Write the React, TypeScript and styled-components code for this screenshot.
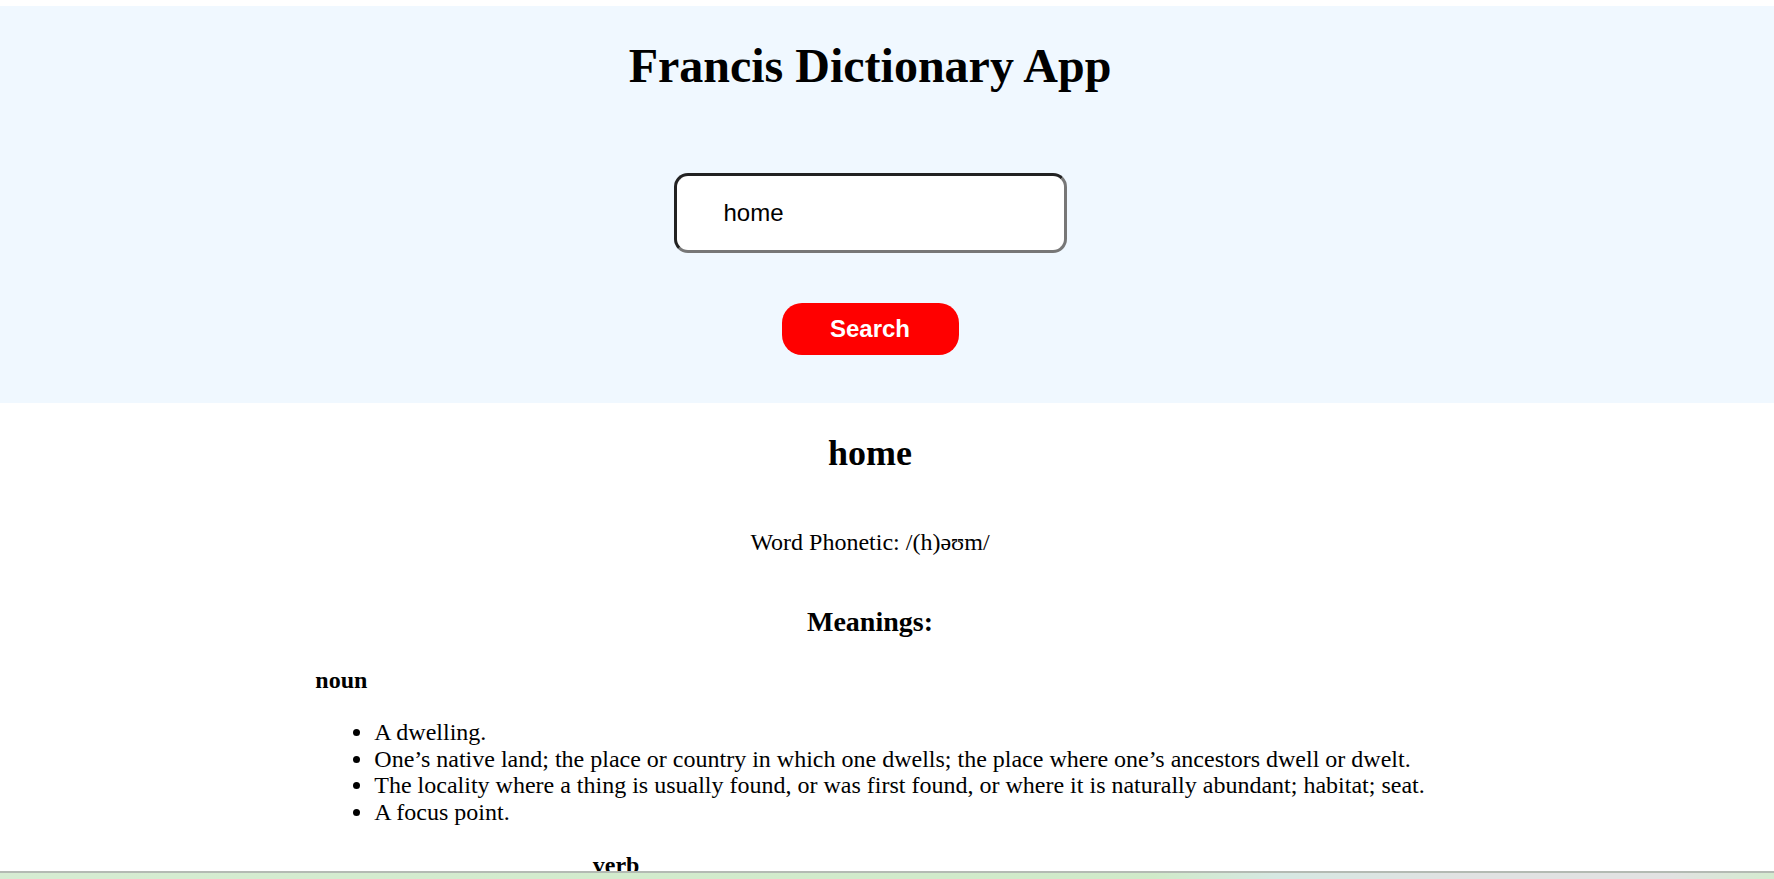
import React, { useState } from "react";
import styled, { createGlobalStyle } from "styled-components";

const GlobalStyle = createGlobalStyle`
  html, body {
    margin: 0;
    padding: 0;
    background: #ffffff;
  }
  body {
    font-family: "Liberation Serif", "Times New Roman", serif;
    font-size: 24px;
    color: #000000;
  }
`;

const Page = styled.div`
  padding-top: 6px;
`;

const Header = styled.header`
  background: #f0f8ff;
  display: flex;
  flex-direction: column;
  align-items: center;
  padding: 32px 34px 48px 0;
`;

const Title = styled.h1`
  margin: 0;
  font-size: 48px;
  line-height: 55px;
  font-weight: bold;
`;

const SearchForm = styled.form`
  display: flex;
  flex-direction: column;
  align-items: center;
  gap: 50px;
  margin-top: 80px;
`;

const SearchInput = styled.input`
  box-sizing: border-box;
  width: 393px;
  height: 80px;
  border: 3px solid;
  border-color: #222222 #777777 #777777 #222222;
  border-radius: 14px;
  padding: 0 0 0 47px;
  background: #ffffff;
  font-family: "Liberation Sans", Arial, sans-serif;
  font-size: 24px;
  color: #000000;
  outline: none;
`;

const SearchButton = styled.button`
  width: 177px;
  height: 52px;
  border: none;
  border-radius: 20px;
  background: #ff0000;
  color: #ffffff;
  font-family: "Liberation Sans", Arial, sans-serif;
  font-weight: bold;
  font-size: 24px;
  cursor: pointer;
`;

const Main = styled.main`
  display: flex;
  flex-direction: column;
  align-items: center;
  padding: 30px 34px 40px 0;
`;

const WordTitle = styled.h2`
  margin: 0;
  font-size: 36px;
  line-height: 41px;
  font-weight: bold;
`;

const Phonetic = styled.p`
  margin: 55px 0 0;
  line-height: 27px;
`;

const MeaningsTitle = styled.h3`
  margin: 50px 0 0;
  font-size: 28px;
  line-height: 32px;
  font-weight: bold;
`;

const MeaningBlock = styled.section<{ $first?: boolean }>`
  margin-top: ${(p) => (p.$first ? "29px" : "26px")};
  text-align: left;
`;

const PartOfSpeech = styled.h4`
  margin: 0;
  font-size: 24px;
  line-height: 27px;
  font-weight: bold;
`;

const DefList = styled.ul`
  margin: 25px 0 0;
  padding-left: 59px;
`;

const DefItem = styled.li`
  line-height: 26.7px;
`;

const BottomStrip = styled.div`
  position: fixed;
  left: 0;
  right: 0;
  bottom: 0;
  height: 8px;
  box-sizing: border-box;
  border-top: 2px solid #b3bab3;
  background: linear-gradient(
    90deg,
    #d6ecd2 0%,
    #d2ebcc 40%,
    #d0eac9 65%,
    #d6e8e2 72%,
    #e0e2e2 82%,
    #e2e2e2 94%,
    #d4ebcf 100%
  );
`;

const meanings = [
  {
    part: "noun",
    defs: [
      "A dwelling.",
      "One\u2019s native land; the place or country in which one dwells; the place where one\u2019s ancestors dwell or dwelt.",
      "The locality where a thing is usually found, or was first found, or where it is naturally abundant; habitat; seat.",
      "A focus point.",
    ],
  },
  {
    part: "verb",
    defs: [
      "To return to one\u2019s home.",
      "To go or return to a place where one lives; to dwell.",
      "To seek or aim for something.",
    ],
  },
];

export default function App() {
  const [query, setQuery] = useState("home");

  return (
    <Page>
      <GlobalStyle />
      <Header>
        <Title>Francis Dictionary App</Title>
        <SearchForm onSubmit={(e) => e.preventDefault()}>
          <SearchInput
            type="text"
            value={query}
            onChange={(e) => setQuery(e.target.value)}
          />
          <SearchButton type="submit">Search</SearchButton>
        </SearchForm>
      </Header>
      <Main>
        <WordTitle>home</WordTitle>
        <Phonetic>Word Phonetic: /(h)əʊm/</Phonetic>
        <MeaningsTitle>Meanings:</MeaningsTitle>
        {meanings.map((m, i) => (
          <MeaningBlock key={m.part} $first={i === 0}>
            <PartOfSpeech>{m.part}</PartOfSpeech>
            <DefList>
              {m.defs.map((d) => (
                <DefItem key={d}>{d}</DefItem>
              ))}
            </DefList>
          </MeaningBlock>
        ))}
      </Main>
      <BottomStrip />
    </Page>
  );
}
